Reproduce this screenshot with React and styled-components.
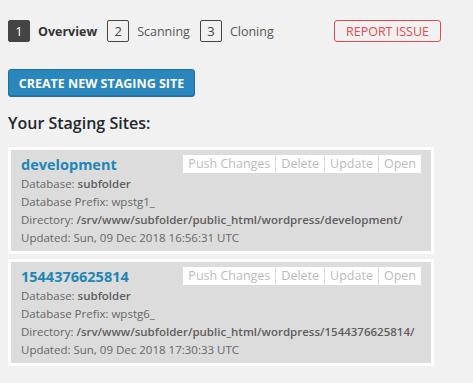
import React from "react";
import styled, { createGlobalStyle } from "styled-components";

const GlobalStyle = createGlobalStyle`
  body {
    margin: 0;
    background: #f1f1f1;
    font-family: "Open Sans", "Noto Sans", sans-serif;
    color: #444;
  }
`;

const Page = styled.div`
  padding: 20px 0 0 8px;
`;

const Steps = styled.div`
  align-items: center;
  display: flex;
  width: 433px;
`;

const Badge = styled.span`
  align-items: center;
  background: ${props => (props.active ? "#444" : "transparent")};
  border: 1px solid #444;
  border-radius: 2px;
  box-sizing: border-box;
  color: ${props => (props.active ? "#fff" : "#444")};
  display: flex;
  font-size: 13px;
  height: 22px;
  justify-content: center;
  margin-right: 8px;
  width: 22px;
`;

const StepLabel = styled.span`
  font-size: 12.5px;
  font-weight: ${props => (props.active ? 700 : 400)};
  color: ${props => (props.active ? "#333" : "#555")};
  margin-right: 10px;
`;

const ReportButton = styled.button`
  background: transparent;
  border: 1px solid #e5484f;
  border-radius: 3px;
  color: #e5484f;
  font-family: inherit;
  font-size: 12.5px;
  height: 22px;
  margin-left: auto;
  padding: 0;
  text-transform: uppercase;
  width: 107px;
`;

const CreateButton = styled.button`
  background: #2a87bd;
  border: 1px solid #1f6e9c;
  border-radius: 3px;
  box-shadow: inset 0 -1px 0 #1f72a3;
  color: #fff;
  display: block;
  font-family: inherit;
  font-size: 12.5px;
  font-weight: 700;
  height: 28px;
  margin-top: 27px;
  padding: 0;
  text-transform: uppercase;
  width: 187px;
`;

const Heading = styled.h3`
  color: #23282d;
  font-size: 16px;
  font-weight: 600;
  line-height: 20px;
  margin: 16px 0 14px;
`;

const Card = styled.div`
  background: #dcdcdc;
  border: 3px solid #fff;
  box-sizing: border-box;
  margin-bottom: 5px;
  padding: 5px 10px 4px 10px;
  width: 426px;
`;

const CardHead = styled.div`
  align-items: flex-start;
  display: flex;
  justify-content: space-between;
`;

const Title = styled.div`
  color: #1f86b6;
  font-size: 14.5px;
  font-weight: 700;
  line-height: 20px;
`;

const Actions = styled.div`
  display: flex;
  gap: 1px;
`;

const Action = styled.span`
  background: #fff;
  color: #bbb;
  font-size: 12.5px;
  height: 18px;
  line-height: 18px;
  padding: 0 5px;
`;

const Line = styled.div`
  color: #666;
  font-size: 11.5px;
  line-height: 18px;

  & b {
    color: #5e5e5e;
    font-weight: 600;
  }
`;

const sites = [
  {
    name: "development",
    database: "subfolder",
    prefix: "wpstg1_",
    directory: "/srv/www/subfolder/public_html/wordpress/development/",
    updated: "Sun, 09 Dec 2018 16:56:31 UTC",
  },
  {
    name: "1544376625814",
    database: "subfolder",
    prefix: "wpstg6_",
    directory: "/srv/www/subfolder/public_html/wordpress/1544376625814/",
    updated: "Sun, 09 Dec 2018 17:30:33 UTC",
  },
];

const steps = ["Overview", "Scanning", "Cloning"];

const StagingCard = ({ site }) => (
  <Card>
    <CardHead>
      <Title>{site.name}</Title>
      <Actions>
        <Action>Push Changes</Action>
        <Action>Delete</Action>
        <Action>Update</Action>
        <Action>Open</Action>
      </Actions>
    </CardHead>
    <Line>
      Database: <b>{site.database}</b>
    </Line>
    <Line>Database Prefix: {site.prefix}</Line>
    <Line>
      Directory: <b>{site.directory}</b>
    </Line>
    <Line>Updated: {site.updated}</Line>
  </Card>
);

const App = () => (
  <Page>
    <GlobalStyle />
    <Steps>
      {steps.map((label, idx) => (
        <React.Fragment key={label}>
          <Badge active={idx === 0}>{idx + 1}</Badge>
          <StepLabel active={idx === 0}>{label}</StepLabel>
        </React.Fragment>
      ))}
      <ReportButton>Report Issue</ReportButton>
    </Steps>
    <CreateButton>Create New Staging Site</CreateButton>
    <Heading>Your Staging Sites:</Heading>
    {sites.map(site => (
      <StagingCard key={site.name} site={site} />
    ))}
  </Page>
);

export default App;
